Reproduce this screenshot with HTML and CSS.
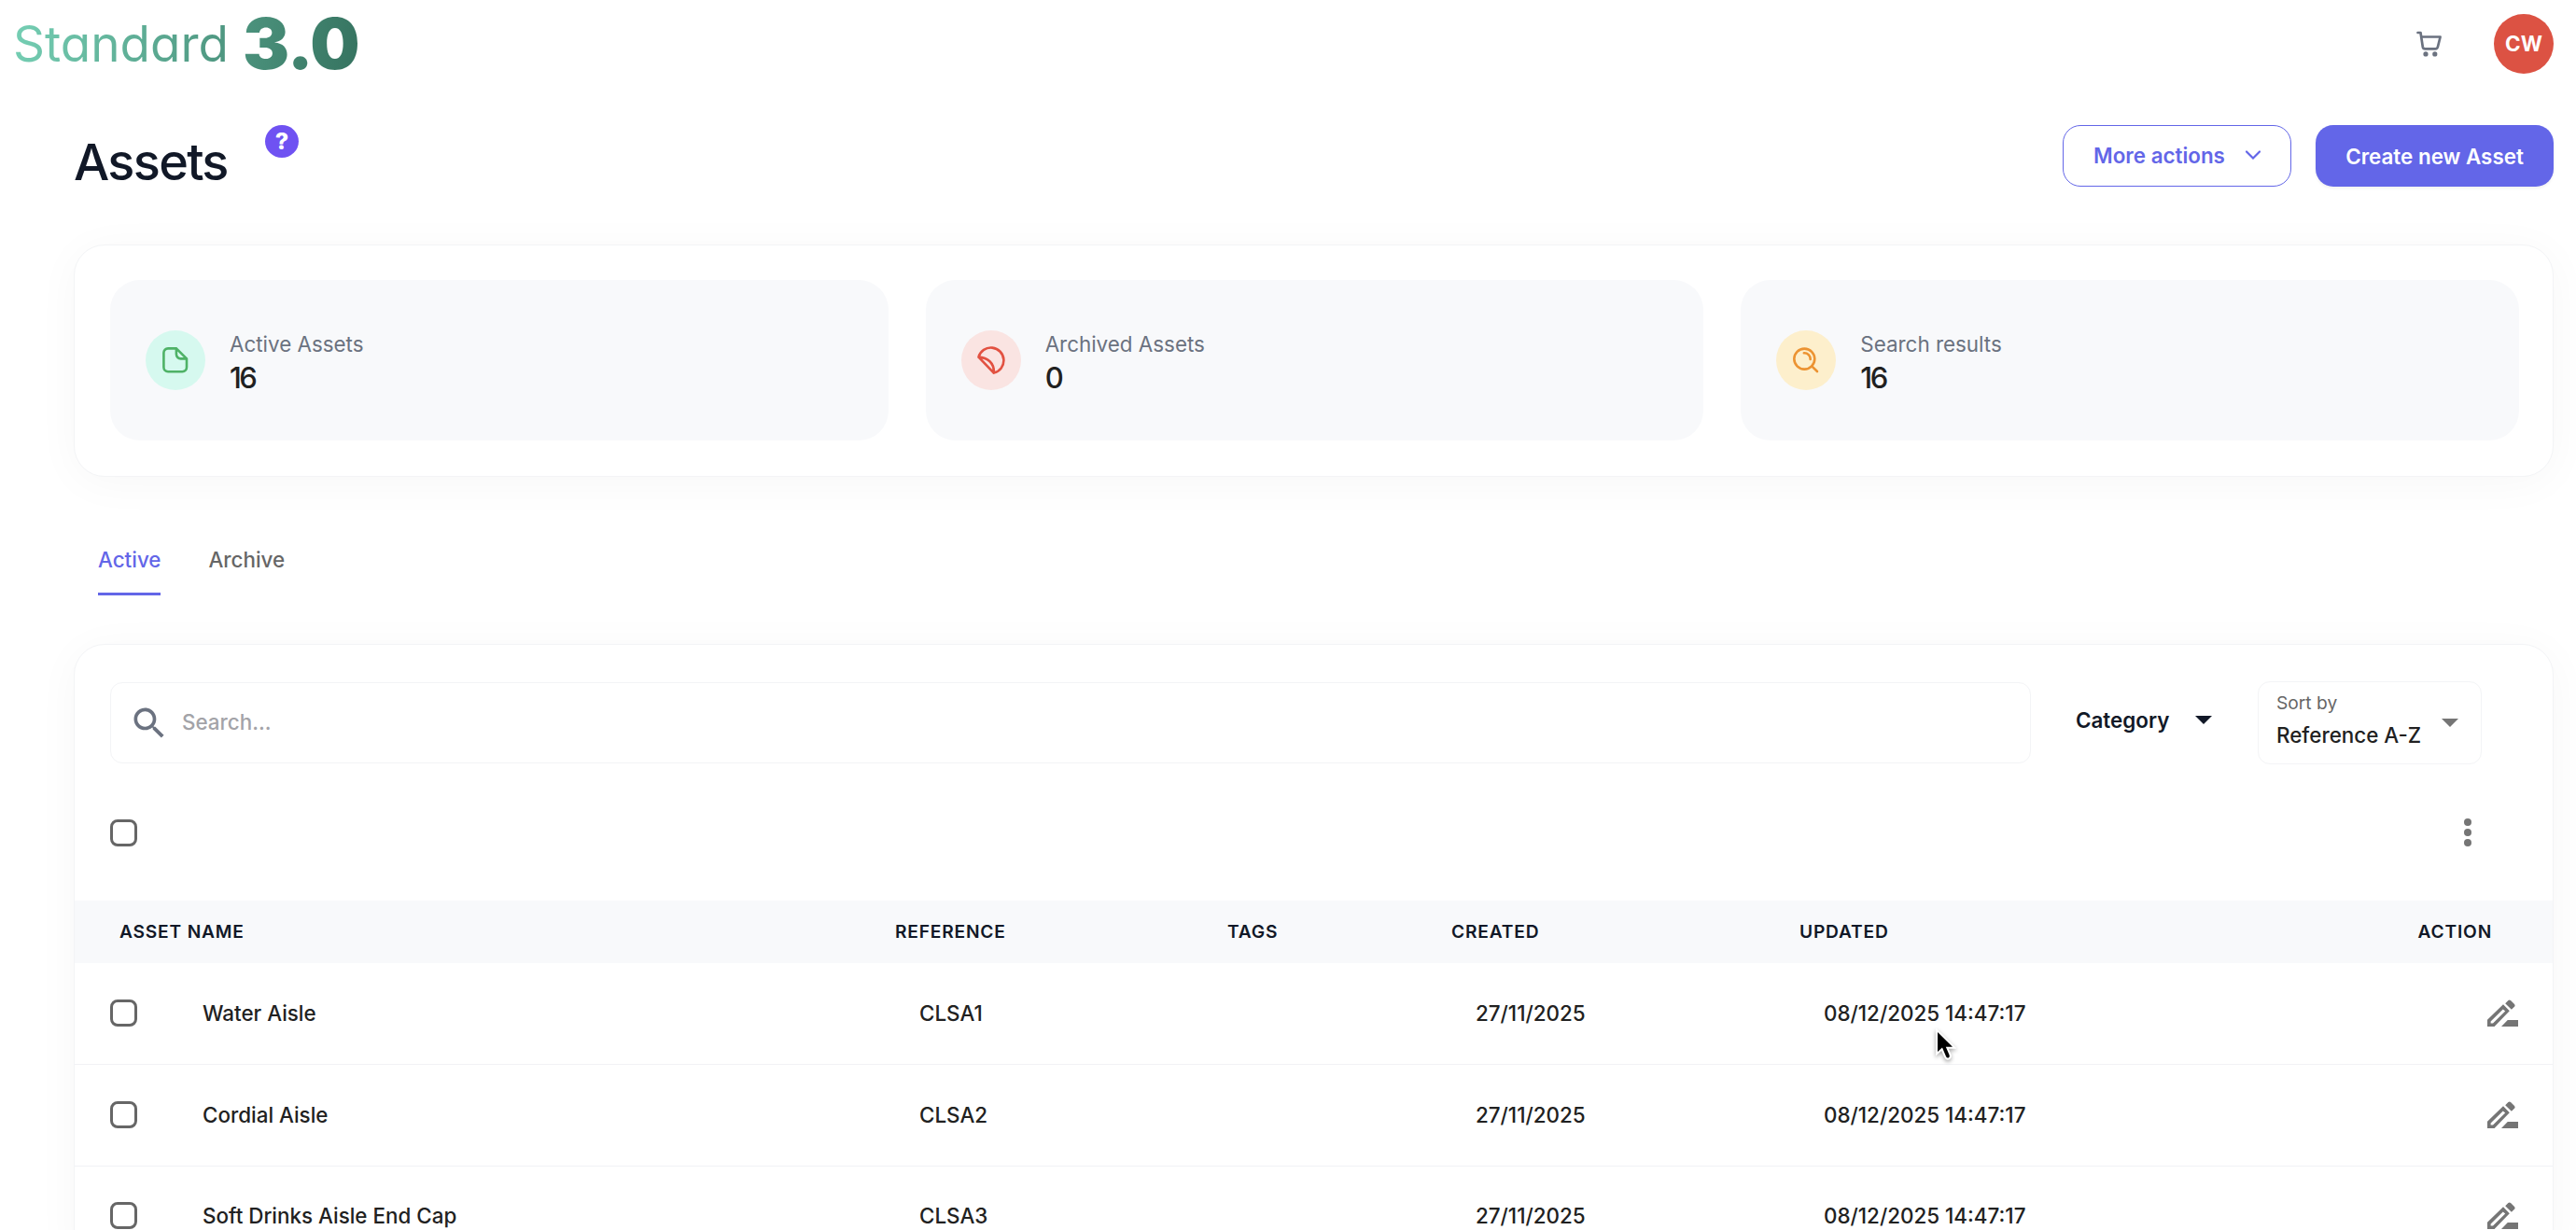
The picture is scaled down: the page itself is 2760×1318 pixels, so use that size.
FILE: index.html
```html
<!DOCTYPE html>
<html lang="en">
<head>
  <meta charset="UTF-8" />
  <meta name="viewport" content="width=device-width, initial-scale=1.0" />
  <title>Assets</title>
  <link rel="stylesheet" href="styles.css">
</head>
<body>
  <header class="topbar">
    <div class="logo"><span class="logo-name">Standard</span><span class="logo-version">3.0</span></div>
    <div class="topbar-actions">
      <svg class="icon-cart" viewBox="0 0 28 28" aria-label="Cart">
        <path d="M1.5 2H4.5L6.8 17.2Q7.2 19.4 9.4 19.4H20.4Q22.4 19.4 22.9 17.3L25.6 6.5H5.2" />
        <circle cx="10" cy="24.9" r="2.6" />
        <circle cx="19.8" cy="24.9" r="2.6" />
      </svg>
      <span class="avatar">CW</span>
    </div>
  </header>

  <main class="page">
    <div class="page-head">
      <h1>Assets</h1>
      <span class="help">?</span>
      <div class="page-buttons">
        <button class="btn btn-outline"><span>More actions</span>
          <svg class="chevron" viewBox="0 0 16 10"><path d="M1 1.5L8 8.5L15 1.5" /></svg>
        </button>
        <button class="btn btn-primary"><span>Create new Asset</span></button>
      </div>
    </div>

    <section class="card stats">
      <div class="stat">
        <span class="stat-icon green">
          <svg viewBox="0 0 28 28"><path d="M14.9 1.4H6A4.6 4.6 0 0 0 1.4 6V21.6A4.6 4.6 0 0 0 6 26.2H21.4A4.6 4.6 0 0 0 26 21.6V12.4ZM14.9 1.4V7.6A4.8 4.8 0 0 0 19.7 12.4H26" /></svg>
        </span>
        <div class="stat-text"><span class="stat-label">Active Assets</span><span class="stat-value">16</span></div>
      </div>
      <div class="stat">
        <span class="stat-icon red">
          <svg viewBox="0 0 30 30"><path d="M1.5 11.6A13.7 13.7 0 1 1 17.8 28.6ZM1.5 11.6C11 12 18.5 18 17.8 28.6" /></svg>
        </span>
        <div class="stat-text"><span class="stat-label">Archived Assets</span><span class="stat-value">0</span></div>
      </div>
      <div class="stat">
        <span class="stat-icon amber">
          <svg viewBox="0 0 28 28"><circle cx="12.3" cy="12.6" r="11" /><path d="M11.8 6.2A6.5 6.5 0 0 1 18.7 13M20.2 20.4L26 26" /></svg>
        </span>
        <div class="stat-text"><span class="stat-label">Search results</span><span class="stat-value">16</span></div>
      </div>
    </section>

    <nav class="tabs">
      <a class="tab active">Active</a>
      <a class="tab">Archive</a>
    </nav>

    <section class="card list">
      <div class="filters">
        <div class="search">
          <svg viewBox="0 0 24 24"><path d="M15.5 14h-.79l-.28-.27C15.41 12.59 16 11.11 16 9.5 16 5.91 13.09 3 9.5 3S3 5.91 3 9.5 5.91 16 9.5 16c1.61 0 3.09-.59 4.23-1.57l.27.28v.79l5 4.99L20.49 19l-4.99-5zm-6 0C7.01 14 5 11.99 5 9.5S7.01 5 9.5 5 14 7.01 14 9.5 11.99 14 9.5 14z" /></svg>
          <span>Search...</span>
        </div>
        <div class="category"><span>Category</span><i class="caret"></i></div>
        <div class="sort">
          <div class="sort-text"><span class="sort-label">Sort by</span><span class="sort-value">Reference A-Z</span></div>
          <i class="caret"></i>
        </div>
      </div>

      <div class="bulk">
        <span class="checkbox"></span>
        <span class="dots"><i></i><i></i><i></i></span>
      </div>

      <table class="assets">
        <colgroup>
          <col class="col-name"><col class="col-ref"><col class="col-tags"><col class="col-created"><col class="col-updated"><col>
        </colgroup>
        <thead>
          <tr><th>Asset name</th><th>Reference</th><th>Tags</th><th>Created</th><th>Updated</th><th>Action</th></tr>
        </thead>
        <tbody>
          <tr>
            <td><div class="name"><span class="checkbox"></span><span>Water Aisle</span></div></td>
            <td>CLSA1</td><td></td><td>27/11/2025</td><td>08/12/2025 14:47:17</td>
            <td><svg class="icon-edit" viewBox="0 0 33 30"><use href="#pencil" /></svg></td>
          </tr>
          <tr>
            <td><div class="name"><span class="checkbox"></span><span>Cordial Aisle</span></div></td>
            <td>CLSA2</td><td></td><td>27/11/2025</td><td>08/12/2025 14:47:17</td>
            <td><svg class="icon-edit" viewBox="0 0 33 30"><use href="#pencil" /></svg></td>
          </tr>
          <tr>
            <td><div class="name"><span class="checkbox"></span><span>Soft Drinks Aisle End Cap</span></div></td>
            <td>CLSA3</td><td></td><td>27/11/2025</td><td>08/12/2025 14:47:17</td>
            <td><svg class="icon-edit" viewBox="0 0 33 30"><use href="#pencil" /></svg></td>
          </tr>
        </tbody>
      </table>
    </section>
  </main>

  <svg class="cursor" viewBox="0 0 24 38">
    <path d="M4 4V25L9 20.6L13 30Q14 32.2 15.8 31.4Q17.4 30.6 16.6 28.6L12.8 19.8H20Z" />
  </svg>

  <svg class="defs" aria-hidden="true">
    <symbol id="pencil" viewBox="0 0 33 30">
      <path fill-rule="evenodd" d="M0 21.7L17 5.2L23.8 12.2L7.6 29H0ZM3.6 23.4V25.6H6L19.2 12.6L16.8 10.4Z" />
      <path d="M19.2 4.2L22.4 1Q23.7 -.1 25 1L29 5Q30.2 6.4 29 7.8L25.9 10.8ZM15 29L21.8 22H33V29Z" />
    </symbol>
  </svg>
</body>
</html>
```
FILE: styles.css
```css
:root {
  --primary: #6366e8;
  --ink: #111827;
  --text: #212121;
  --muted: #6b7280;
  --grey: #757575;
  --line: #f3f4f6;
  --tile: #f8f9fb;
}

* {
  box-sizing: border-box;
}

body {
  margin: 0;
  height: 1318px;
  overflow: hidden;
  position: relative;
  background: #fff;
  color: var(--text);
  font-family: Inter, "Liberation Sans", sans-serif;
  font-size: 22.4px;
  font-weight: 500;
}

svg {
  display: block;
}

.topbar {
  display: flex;
  justify-content: space-between;
  height: 94px;
  padding: 0 24px 0 14px;
}

.logo {
  display: flex;
  align-items: center;
  gap: 15px;
  height: 94px;
  line-height: 94px;
  font-feature-settings: "cv11";
  color: transparent;
  background: linear-gradient(100deg, #76d0b5, #35725f);
  background-clip: text;
  -webkit-background-clip: text;
}

.logo-name {
  font-size: 53px;
  font-weight: 400;
}

.logo-version {
  font-size: 75px;
  font-weight: 900;
  letter-spacing: -1px;
}

.topbar-actions {
  display: flex;
  align-items: center;
  gap: 55px;
}

.icon-cart {
  width: 28px;
  height: 28px;
  fill: none;
  stroke: var(--muted);
  stroke-width: 2.7;
  stroke-linecap: round;
  stroke-linejoin: round;
}

.icon-cart circle {
  fill: var(--muted);
  stroke: none;
}

.avatar {
  width: 64px;
  height: 64px;
  border-radius: 50%;
  background: #dc5243;
  color: #fff;
  font-weight: 700;
  line-height: 64px;
  text-align: center;
}

.page {
  padding: 40px 24px 0 79px;
}

.page-head {
  display: flex;
  align-items: flex-start;
  height: 128px;
}

h1 {
  width: 165px;
  margin: 7px 0 0;
  font-size: 54px;
  font-weight: 500;
  letter-spacing: -1.7px;
  line-height: 66px;
  color: var(--ink);
}

.help {
  width: 36px;
  height: 35px;
  margin-left: 40px;
  border-radius: 50%;
  background: #6f52f2;
  color: #fff;
  font-size: 25px;
  font-weight: 800;
  line-height: 35px;
  text-align: center;
}

.page-buttons {
  display: flex;
  gap: 26px;
  margin-left: auto;
}

.btn {
  display: flex;
  align-items: center;
  justify-content: center;
  height: 66px;
  border-radius: 19px;
  font: inherit;
  font-weight: 600;
}

.btn-outline {
  width: 245px;
  gap: 22px;
  padding-bottom: 3px;
  border: 1px solid var(--primary);
  background: #fff;
  color: var(--primary);
}

.btn-primary {
  width: 255px;
  border: 0;
  background: var(--primary);
  color: #fff;
  box-shadow: 0 2px 3px rgba(0, 0, 0, 0.06);
}

.chevron {
  width: 16px;
  height: 10px;
  fill: none;
  stroke: var(--primary);
  stroke-width: 2.2;
  stroke-linecap: round;
}

.card {
  border: 1px solid var(--line);
  border-radius: 33px;
  background: #fff;
  box-shadow: 0 6px 48px rgba(0, 0, 0, 0.035);
}

.stats {
  display: grid;
  grid-template-columns: repeat(3, 1fr);
  gap: 40px;
  height: 249px;
  padding: 37px 36px 37px 38px;
}

.stat {
  display: flex;
  align-items: center;
  gap: 26px;
  height: 172px;
  padding-left: 38px;
  border-radius: 32px;
  background: var(--tile);
}

.stat-icon {
  display: grid;
  place-items: center;
  width: 64px;
  height: 64px;
  border-radius: 50%;
}

.stat-icon svg {
  width: 28px;
  height: 28px;
  fill: none;
  stroke: currentColor;
  stroke-width: 2.6;
  stroke-linecap: round;
  stroke-linejoin: round;
}

.stat-icon.red svg {
  width: 30px;
  height: 30px;
}

.green {
  background: #d6f9ef;
  color: #4fb267;
}

.red {
  background: #fae4e2;
  color: #e25141;
}

.amber {
  background: #fdefcc;
  color: #ec9332;
}

.stat-text {
  display: flex;
  flex-direction: column;
  padding-top: 4px;
}

.stat-label {
  color: var(--muted);
  font-weight: 400;
  line-height: 32px;
}

.stat-value {
  padding-top: 1px;
  margin-bottom: -1px;
  font-size: 31px;
  font-weight: 500;
  letter-spacing: -2.5px;
  line-height: 38px;
}

.tabs {
  display: flex;
  gap: 51px;
  margin-top: 72px;
  padding-left: 26px;
}

.tab {
  height: 55px;
  line-height: 34px;
  color: #666;
}

.tab.active {
  border-bottom: 3px solid var(--primary);
  color: var(--primary);
}

.list {
  margin-top: 52px;
  padding-top: 39px;
}

.filters {
  display: flex;
  align-items: center;
  height: 89px;
  padding: 0 76px 0 38px;
}

.search {
  display: flex;
  align-items: center;
  width: 2058px;
  height: 87px;
  padding-left: 19px;
  border: 1px solid var(--line);
  border-radius: 13px;
  color: #a3a3a8;
}

.search span {
  padding-bottom: 3px;
}

.search svg {
  width: 44px;
  height: 44px;
  margin-right: 13px;
  fill: var(--muted);
}

.caret {
  border: 9px solid transparent;
  border-top-color: currentColor;
  border-bottom: 0;
}

.category {
  display: flex;
  align-items: center;
  gap: 28px;
  margin-left: 48px;
  padding-bottom: 6px;
  color: var(--ink);
  font-weight: 600;
}

.sort {
  display: flex;
  align-items: center;
  justify-content: space-between;
  width: 240px;
  height: 89px;
  margin-left: auto;
  padding: 0 24px 0 19px;
  border: 1px solid var(--line);
  border-radius: 13px;
}

.sort .caret {
  color: var(--grey);
}

.sort-text {
  display: flex;
  flex-direction: column;
  padding-bottom: 7px;
}

.sort-label {
  color: #666;
  font-size: 19.2px;
  font-weight: 400;
  line-height: 34px;
}

.sort-value {
  line-height: 36px;
}

.bulk {
  display: flex;
  align-items: center;
  justify-content: space-between;
  height: 146px;
  padding: 0 87px 0 38px;
}

.checkbox {
  width: 29px;
  height: 29px;
  border: 3px solid #666;
  border-radius: 8px;
}

.dots {
  display: flex;
  flex-direction: column;
  gap: 3px;
}

.dots i {
  width: 8px;
  height: 8px;
  border-radius: 50%;
  background: var(--grey);
}

.assets {
  width: 100%;
  table-layout: fixed;
  border-collapse: collapse;
}

.col-name { width: 853px; }
.col-ref { width: 356px; }
.col-tags { width: 240px; }
.col-created { width: 373px; }
.col-updated { width: 400px; }

th {
  height: 67px;
  padding: 0 0 2px 26px;
  background: var(--tile);
  color: var(--ink);
  font-size: 19.2px;
  font-weight: 600;
  letter-spacing: 0.8px;
  text-align: left;
  text-transform: uppercase;
}

th:first-child {
  padding-left: 48px;
}

th:last-child {
  padding: 0 65px 2px 0;
  text-align: right;
}

td {
  height: 108.5px;
  padding: 0 0 1px 52px;
  border-bottom: 1px solid #f1f2f5;
}

td:first-child {
  padding-left: 38px;
}

td:last-child {
  padding: 0 37px 0 0;
}

.name {
  display: flex;
  align-items: center;
  gap: 70px;
}

.icon-edit {
  width: 33px;
  height: 30px;
  margin-left: auto;
  fill: var(--grey);
}

.cursor {
  position: absolute;
  left: 2072px;
  top: 1102px;
  width: 24px;
  height: 38px;
  fill: #000;
  stroke: #fff;
  stroke-width: 4;
  paint-order: stroke;
  filter: drop-shadow(0 2px 2px rgba(0, 0, 0, 0.35));
}

.defs {
  position: absolute;
  width: 0;
  height: 0;
}
```
